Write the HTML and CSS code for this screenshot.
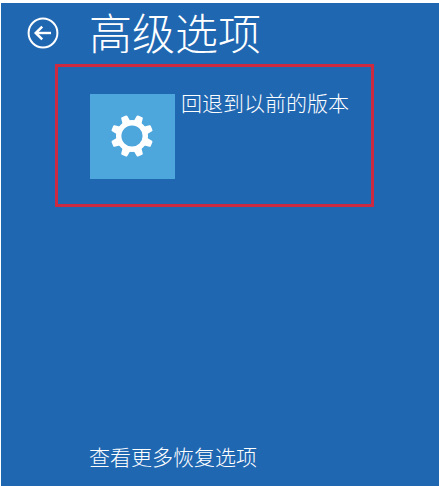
FILE: index.html
```html
<!DOCTYPE html>
<html lang="zh-CN">
<head>
    <meta charset="UTF-8">
    <meta name="viewport" content="width=device-width, initial-scale=1.0">
    <title>高级选项</title>
    <link rel="stylesheet" href="styles.css">
</head>
<body>
    <div class="screen">
        <!-- Title with back button -->
        <header class="header">
            <button class="back-btn" type="button" aria-label="返回">
                <svg width="32" height="32" viewBox="0 0 32 32" fill="none" stroke="#fff">
                    <circle cx="16" cy="16" r="14.4" stroke-width="2"/>
                    <path d="M24 16H9.5" stroke-width="2.4"/>
                    <path d="M15.2 9.6L8.8 16l6.4 6.4" stroke-width="2.6"/>
                </svg>
            </button>
            <h1>高级选项</h1>
        </header>

        <!-- Highlighted option -->
        <main class="highlight">
            <button class="option" type="button">
                <span class="tile">
                    <svg width="43" height="43" viewBox="-21 -21 43 43" fill="#fff">
                        <defs>
                            <path id="tooth" d="M-4.2 -14L-3.3 -20.2Q-3.1 -21.2 -2.2 -21.2H2.2Q3.1 -21.2 3.3 -20.2L4.2 -14Z"/>
                        </defs>
                        <circle r="13.3" fill="none" stroke="#fff" stroke-width="5.4"/>
                        <use href="#tooth" transform="rotate(22.5)"/>
                        <use href="#tooth" transform="rotate(67.5)"/>
                        <use href="#tooth" transform="rotate(112.5)"/>
                        <use href="#tooth" transform="rotate(157.5)"/>
                        <use href="#tooth" transform="rotate(202.5)"/>
                        <use href="#tooth" transform="rotate(247.5)"/>
                        <use href="#tooth" transform="rotate(292.5)"/>
                        <use href="#tooth" transform="rotate(337.5)"/>
                    </svg>
                </span>
                <span class="option-label">回退到以前的版本</span>
            </button>
        </main>

        <a class="more-link" href="#">查看更多恢复选项</a>
    </div>
</body>
</html>
```

FILE: styles.css
```css
/* General styling */
* {
    margin: 0;
    padding: 0;
    box-sizing: border-box;
}
body {
    display: flex;
    min-height: 100vh;
    padding: 3px 0 0 1px;
    background: #fff;
    color: #fff;
    font-family: "Noto Sans CJK SC", sans-serif;
    font-weight: 300;
}
button {
    border: none;
    background: none;
    color: inherit;
    font: inherit;
    cursor: pointer;
}
.screen {
    display: flex;
    flex: 1;
    flex-direction: column;
    background: #2067b2;
}
/* Header */
.header {
    display: flex;
    align-items: flex-start;
    gap: 30px;
    height: 60px;
    padding-left: 26px;
}
.back-btn {
    display: flex;
    margin-top: 14px;
}
h1 {
    font-size: 43px;
    font-weight: 300;
    line-height: 56px;
}
/* Option in the red frame */
.highlight {
    margin: 1px 65px 0 54px;
    padding: 27px 0 25px 32px;
    border: 3px solid #cb2a40;
}
.option {
    display: flex;
    gap: 6px;
    text-align: left;
}
.tile {
    display: flex;
    align-items: center;
    justify-content: center;
    width: 85px;
    height: 85px;
    background: #4da6dc;
}
.option-label {
    font-size: 21px;
    line-height: 16px;
}
.more-link {
    margin: auto auto 15px 88px;
    color: #fff;
    font-size: 21px;
    line-height: 30px;
    text-decoration: none;
}
```
